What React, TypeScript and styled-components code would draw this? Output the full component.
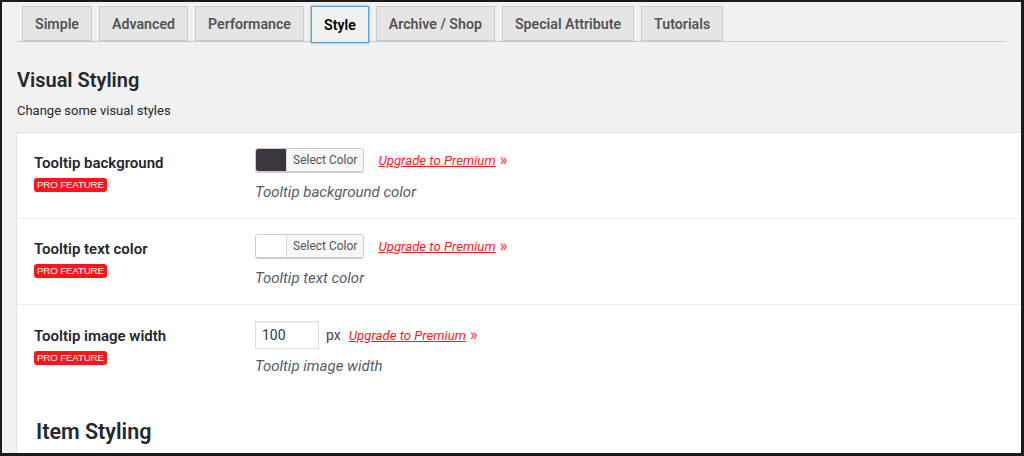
import React from 'react';
import styled, { createGlobalStyle } from 'styled-components';

const GlobalStyle = createGlobalStyle`
  html, body {
    margin: 0;
    padding: 0;
    background: #f1f1f1;
  }
  body {
    font-family: Roboto, 'Liberation Sans', sans-serif;
    color: #23282d;
  }
`;

const Frame = styled.div`
  box-sizing: border-box;
  width: 1024px;
  height: 456px;
  overflow: hidden;
  border-style: solid;
  border-color: #1b1b1b;
  border-width: 2px 3px 3px 2px;
  background: #f1f1f1;
  display: flex;
  flex-direction: column;
`;

const TabBar = styled.div`
  display: flex;
  gap: 7px;
  margin: 4px 16px 0 15px;
  padding-left: 5px;
  border-bottom: 1px solid #cccccc;
  height: 35px;
`;

const Tab = styled.div<{ $active?: boolean }>`
  box-sizing: border-box;
  height: ${p => (p.$active ? '37px' : '35px')};
  padding: 0 12px;
  display: flex;
  align-items: center;
  font-size: 14.2px;
  font-weight: 600;
  color: ${p => (p.$active ? '#000' : '#555')};
  background: ${p => (p.$active ? '#f1f1f1' : '#e5e5e5')};
  border: 1px solid ${p => (p.$active ? '#5b9dd9' : '#cccccc')};
  box-shadow: ${p => (p.$active ? '0 0 2px rgba(30, 140, 190, 0.8)' : 'none')};
  margin-bottom: ${p => (p.$active ? '-2px' : '0')};
`;

const Header = styled.div`
  padding: 25px 0 0 15px;
`;

const Title = styled.h2`
  margin: 0;
  font-size: 20px;
  font-weight: 600;
  line-height: 26px;
  color: #23282d;
`;

const Subtitle = styled.p`
  margin: 9px 0 0;
  font-size: 13px;
  line-height: 18px;
  color: #23282d;
`;

const Panel = styled.div`
  flex: 1;
  margin: 12px 0 0 14px;
  background: #ffffff;
  border-top: 1px solid #e2e2e2;
  border-left: 1px solid #e2e2e2;
`;

const Row = styled.div<{ $last?: boolean }>`
  display: grid;
  grid-template-columns: 221px 1fr;
  padding: 15px 0 0 17px;
  height: ${p => (p.$last ? '92px' : '86px')};
  box-sizing: border-box;
  border-bottom: ${p => (p.$last ? 'none' : '1px solid #ececec')};
`;

const LabelCell = styled.div<{ $shift: number }>`
  display: flex;
  flex-direction: column;
  align-items: flex-start;
  padding-top: ${p => p.$shift}px;
`;

const Label = styled.div`
  font-size: 15px;
  font-weight: 600;
  line-height: 18px;
  color: #23282d;
`;

const ProBadge = styled.span`
  margin-top: 6px;
  background: #ff1419;
  color: #ffffff;
  font-family: 'Liberation Sans', Arial, sans-serif;
  font-size: 9.8px;
  line-height: 14px;
  padding: 0 3px;
  border-radius: 3px;
  letter-spacing: -0.2px;
`;

const FieldCell = styled.div<{ $shift: number }>`
  display: flex;
  flex-direction: column;
  padding-top: ${p => p.$shift}px;
`;

const Controls = styled.div`
  display: flex;
  align-items: center;
`;

const ColorPicker = styled.div`
  display: flex;
  box-sizing: border-box;
  height: 24px;
  border: 1px solid #cccccc;
  border-radius: 3px;
  overflow: hidden;
  box-shadow: 0 1px 0 #cccccc;
`;

const Swatch = styled.div<{ $color: string }>`
  width: 30px;
  background: ${p => p.$color};
`;

const SelectButton = styled.div`
  display: flex;
  align-items: center;
  padding: 0 6px;
  background: #f7f7f7;
  border-left: 1px solid #dddddd;
  font-size: 12px;
  color: #555;
`;

const NumberInput = styled.div`
  box-sizing: border-box;
  width: 64px;
  height: 28px;
  border: 1px solid #dddddd;
  box-shadow: inset 0 1px 2px rgba(0, 0, 0, 0.07);
  display: flex;
  align-items: center;
  padding-left: 6px;
  font-size: 14px;
  color: #32373c;
`;

const Unit = styled.span`
  margin-left: 7px;
  font-size: 14px;
  color: #444;
`;

const Upgrade = styled.a<{ $gap: number }>`
  margin-left: ${p => p.$gap}px;
  font-size: 13.2px;
  font-style: italic;
  color: #ff1a1a;
  text-decoration: none;
  display: flex;
  align-items: center;
  gap: 4px;

  span {
    text-decoration: underline;
  }
`;

const Guillemet = styled.b`
  font-style: normal;
  font-size: 16px;
  font-weight: 400;
  line-height: 1;
`;

const Description = styled.p<{ $top: number }>`
  margin: ${p => p.$top}px 0 0;
  font-size: 15px;
  font-style: italic;
  color: #555d66;
  line-height: 18px;
`;

const SectionTitle = styled.h2`
  margin: 22px 0 0 19px;
  font-size: 21.5px;
  font-weight: 600;
  line-height: 26px;
  color: #23282d;
`;

const SectionSub = styled.p`
  margin: 9px 0 0 19px;
  font-size: 13px;
  color: #23282d;
`;

const tabs = ['Simple', 'Advanced', 'Performance', 'Style', 'Archive / Shop', 'Special Attribute', 'Tutorials'];

const UpgradeLink = ({ gap }: { gap: number }) => (
  <Upgrade $gap={gap} href="#">
    <span>Upgrade to Premium</span>
    <Guillemet>»</Guillemet>
  </Upgrade>
);

export default function App() {
  return (
    <Frame>
      <GlobalStyle />
      <TabBar>
        {tabs.map(t => (
          <Tab key={t} $active={t === 'Style'}>
            {t}
          </Tab>
        ))}
      </TabBar>
      <Header>
        <Title>Visual Styling</Title>
        <Subtitle>Change some visual styles</Subtitle>
      </Header>
      <Panel>
        <Row>
          <LabelCell $shift={6}>
            <Label>Tooltip background</Label>
            <ProBadge>PRO FEATURE</ProBadge>
          </LabelCell>
          <FieldCell $shift={0}>
            <Controls>
              <ColorPicker>
                <Swatch $color="#3b3640" />
                <SelectButton>Select Color</SelectButton>
              </ColorPicker>
              <UpgradeLink gap={14} />
            </Controls>
            <Description $top={11}>Tooltip background color</Description>
          </FieldCell>
        </Row>
        <Row>
          <LabelCell $shift={6}>
            <Label>Tooltip text color</Label>
            <ProBadge>PRO FEATURE</ProBadge>
          </LabelCell>
          <FieldCell $shift={0}>
            <Controls>
              <ColorPicker>
                <Swatch $color="#ffffff" />
                <SelectButton>Select Color</SelectButton>
              </ColorPicker>
              <UpgradeLink gap={14} />
            </Controls>
            <Description $top={11}>Tooltip text color</Description>
          </FieldCell>
        </Row>
        <Row $last>
          <LabelCell $shift={7}>
            <Label>Tooltip image width</Label>
            <ProBadge>PRO FEATURE</ProBadge>
          </LabelCell>
          <FieldCell $shift={1}>
            <Controls>
              <NumberInput>100</NumberInput>
              <Unit>px</Unit>
              <UpgradeLink gap={8} />
            </Controls>
            <Description $top={8}>Tooltip image width</Description>
          </FieldCell>
        </Row>
        <SectionTitle>Item Styling</SectionTitle>
        <SectionSub>Change item display style</SectionSub>
      </Panel>
    </Frame>
  );
}
